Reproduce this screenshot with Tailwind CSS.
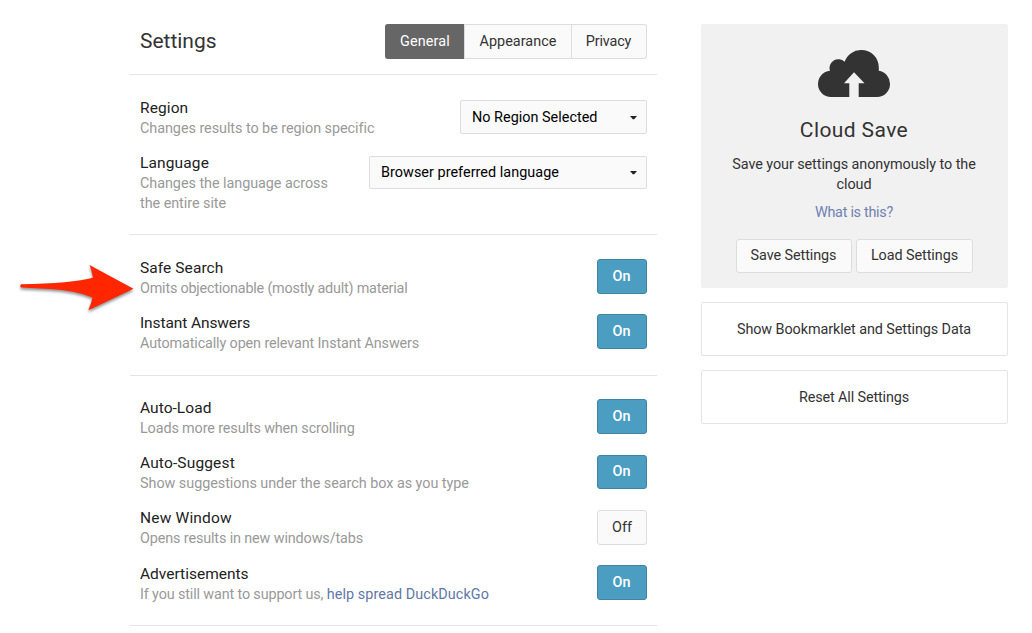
<!DOCTYPE html>
<html lang="en">
<head>
<meta charset="utf-8">
<title>Settings</title>
<script src="https://cdn.jsdelivr.net/npm/@tailwindcss/browser@4"></script>
</head>
<body class="relative h-[633px] w-[1032px] overflow-hidden bg-white font-[Roboto,sans-serif] text-[14.4px] leading-5 text-[#333]">
<div class="flex items-start gap-11 pl-[130px]">
  <main class="w-[527px]">
    <header class="flex h-[75px] items-start justify-between border-b border-[#e5e5e5] pt-6 pr-2.5 pl-2.5">
      <h1 class="pt-[3px] text-[21px] leading-7 tracking-[-0.02px]">Settings</h1>
      <nav class="flex h-[35px] leading-[33px]">
        <a class="w-[79px] rounded-l-[3px] border-y border-l border-[#666] bg-[#666] text-center tracking-[0.15px] text-white">General</a>
        <a class="w-[108px] border border-[#ddd] bg-[#fafafa] text-center tracking-[0.05px]">Appearance</a>
        <a class="w-[75px] rounded-r-[3px] border-y border-r border-[#ddd] bg-[#fafafa] pr-px text-center tracking-[-0.14px]">Privacy</a>
      </nav>
    </header>

    <section class="flex h-[160px] flex-col gap-[15px] border-b border-[#e5e5e5] px-2.5 pt-[23px]">
      <div class="flex h-10 justify-between">
        <div>
          <h2 class="text-[15.5px] tracking-[0.1px] text-[#222]">Region</h2>
          <p class="pt-px tracking-[-0.05px] text-[#999]">Changes results to be region specific</p>
        </div>
        <div class="mt-0.5 flex h-[34px] w-[187px] items-center justify-between rounded-[2px] border border-[#ddd] bg-[#fafafa] pr-[9px] pl-[11px] tracking-[0.02px] text-black">
          <span class="pt-px">No Region Selected</span>
          <svg class="mt-px h-1 w-[7px]" viewBox="0 0 7 4" fill="#222"><path d="M0 0h7L4.2 3.2H2.8z"/></svg>
        </div>
      </div>
      <div class="flex justify-between">
        <div class="w-[200px]">
          <h2 class="text-[15.5px] tracking-[0.14px] text-[#222]">Language</h2>
          <p class="pt-px tracking-[-0.05px] text-[#999]">Changes the language across<br>the entire site</p>
        </div>
        <div class="mt-[3px] flex h-[33px] w-[278px] items-center justify-between rounded-[2px] border border-[#ddd] bg-[#fafafa] pr-[9px] pl-[11px] tracking-[0.04px] text-black">
          <span>Browser preferred language</span>
          <svg class="mt-px h-1 w-[7px]" viewBox="0 0 7 4" fill="#222"><path d="M0 0h7L4.2 3.2H2.8z"/></svg>
        </div>
      </div>
    </section>

    <section class="flex h-[141px] flex-col gap-[15px] border-b border-[#e5e5e5] px-2.5 pt-[23px]">
      <div class="flex h-10 justify-between">
        <div>
          <h2 class="text-[15.5px] tracking-[0.08px] text-[#222]">Safe Search</h2>
          <p class="pt-px tracking-[-0.21px] text-[#999]">Omits objectionable (mostly adult) material</p>
        </div>
        <button class="mt-px h-[35px] w-[50px] rounded-[3px] border border-[#3d85a3] bg-[#4b9dc1] pr-px font-medium text-white">On</button>
      </div>
      <div class="flex h-10 justify-between">
        <div>
          <h2 class="text-[15.5px] tracking-[-0.1px] text-[#222]">Instant Answers</h2>
          <p class="pt-px tracking-[-0.13px] text-[#999]">Automatically open relevant Instant Answers</p>
        </div>
        <button class="mt-px h-[35px] w-[50px] rounded-[3px] border border-[#3d85a3] bg-[#4b9dc1] pr-px font-medium text-white">On</button>
      </div>
    </section>

    <section class="flex h-[250px] flex-col gap-[15px] border-b border-[#e5e5e5] px-2.5 pt-[22px]">
      <div class="flex h-10 justify-between">
        <div>
          <h2 class="text-[15.5px] tracking-[0.05px] text-[#222]">Auto-Load</h2>
          <p class="pt-px tracking-[-0.13px] text-[#999]">Loads more results when scrolling</p>
        </div>
        <button class="mt-px h-[35px] w-[50px] rounded-[3px] border border-[#3d85a3] bg-[#4b9dc1] pr-px font-medium text-white">On</button>
      </div>
      <div class="flex h-10 justify-between">
        <div>
          <h2 class="text-[15.5px] tracking-[0.15px] text-[#222]">Auto-Suggest</h2>
          <p class="pt-px tracking-[-0.04px] text-[#999]">Show suggestions under the search box as you type</p>
        </div>
        <button class="mt-0.5 h-[34px] w-[50px] rounded-[3px] border border-[#3d85a3] bg-[#4b9dc1] pr-px font-medium text-white">On</button>
      </div>
      <div class="flex h-10 justify-between">
        <div>
          <h2 class="text-[15.5px] tracking-[0.18px] text-[#222]">New Window</h2>
          <p class="pt-px tracking-[-0.13px] text-[#999]">Opens results in new windows/tabs</p>
        </div>
        <button class="mt-0.5 h-[35px] w-[50px] rounded-[3px] border border-[#ddd] bg-[#fafafa]">Off</button>
      </div>
      <div class="mt-px flex h-10 justify-between">
        <div>
          <h2 class="text-[15.5px] text-[#222]">Advertisements</h2>
          <p class="pt-px tracking-[-0.14px] text-[#999]">If you still want to support us, <a class="tracking-[0.08px] text-[#6177a6]">help spread DuckDuckGo</a></p>
        </div>
        <button class="mt-px h-[35px] w-[50px] rounded-[3px] border border-[#3d85a3] bg-[#4b9dc1] pr-px font-medium text-white">On</button>
      </div>
    </section>
  </main>

  <aside class="mt-6 flex w-[307px] flex-col gap-3.5 text-center">
    <div class="flex h-[264px] flex-col items-center rounded-[2px] bg-[#f1f1f1] pt-[26px]">
      <svg class="mr-px h-[47px] w-[72px] shrink-0" viewBox="0 0 72 47" fill="#333">
        <path d="M13 47A13 13 0 0 1 0 34A13.3 13.3 0 0 1 12 20.8A8.8 8.8 0 0 1 26.6 11.800A17.4 17.4 0 0 1 43.400 0A17.4 17.4 0 0 1 60.800 17.4V20.800A13.2 13.2 0 0 1 72 34A13 13 0 0 1 59 47H40.700V33.300H46.500L36 22.300L26 33.300H31.300V47z"/>
      </svg>
      <h2 class="mt-[19px] pr-px text-[21px] leading-7 tracking-[0.4px]">Cloud Save</h2>
      <p class="mt-[11px] pr-px tracking-[-0.07px]">Save your settings anonymously to the<br>cloud</p>
      <a class="mt-2 pr-px tracking-[-0.28px] text-[#6f82b0]">What is this?</a>
      <div class="mt-4 flex gap-1">
        <button class="h-[34px] w-[116px] rounded-[3px] border border-[#ddd] bg-[#fafafa] pr-px tracking-[-0.07px]">Save Settings</button>
        <button class="h-[34px] w-[117px] rounded-[3px] border border-[#ddd] bg-[#fafafa] tracking-[-0.07px]">Load Settings</button>
      </div>
    </div>
    <a class="h-[54px] rounded-[2px] border border-[#e5e5e5] pt-px pr-px leading-[52px] tracking-[-0.09px]">Show Bookmarklet and Settings Data</a>
    <a class="h-[54px] rounded-[2px] border border-[#e5e5e5] pt-px pr-px leading-[52px] tracking-[-0.13px]">Reset All Settings</a>
  </aside>
</div>

<!-- Callout arrow laid over the page, pointing at Safe Search -->
<svg class="absolute top-[255px] left-[10px] h-[70px] w-[135px] drop-shadow-[0_2px_1.5px_rgba(0,0,0,0.45)]" viewBox="10 255 135 70" fill="#ff2600">
  <path d="M21 284.200Q72 283.500 93 277.800Q92 271 89.500 265L133.500 288.800L88.300 310.300Q91.500 303 92.500 297.500Q75 290 50 289L21 287.500Q19.500 286 21 284.200z"/>
</svg>
</body>
</html>
